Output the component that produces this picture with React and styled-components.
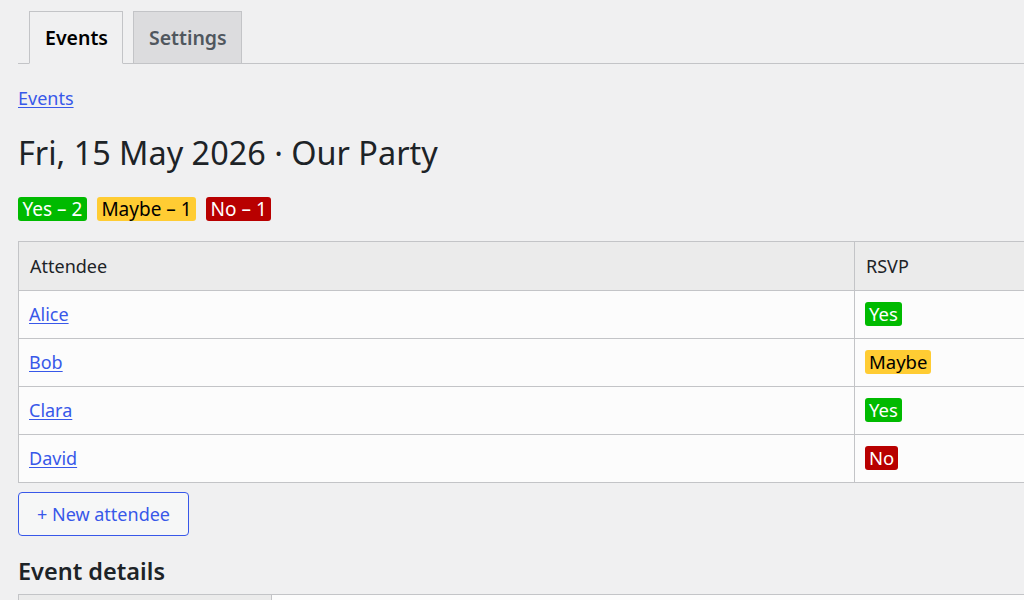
import React from "react";
import styled, { createGlobalStyle } from "styled-components";

const Global = createGlobalStyle`
  html, body { margin: 0; padding: 0; overflow: hidden; }
  body {
    background: #f0f0f1;
    font-family: "Noto Sans", "Open Sans", sans-serif;
    color: #1d2327;
    font-size: 18px;
  }
`;

const Page = styled.div`
  padding: 11px 0 0 18px;
  width: 1200px;
`;

const TabBar = styled.nav`
  display: flex;
  gap: 10px;
  padding-left: 11px;
  border-bottom: 1px solid #c3c4c7;
  width: 1006px;
`;

const Tab = styled.div`
  box-sizing: border-box;
  height: 53px;
  margin-bottom: -1px;
  padding: 0 14px 0 15px;
  display: flex;
  align-items: center;
  font-size: 19.5px;
  font-weight: 600;
  border: 1px solid #c3c4c7;
  background: ${(p) => (p.$active ? "#f0f0f1" : "#dcdcde")};
  color: ${(p) => (p.$active ? "#000" : "#50575e")};
  border-bottom: ${(p) => (p.$active ? "1px solid #f0f0f1" : "1px solid #c3c4c7")};
`;

const Link = styled.a`
  color: #3858e9;
  text-decoration: underline;
  text-underline-offset: 2px;
  cursor: pointer;
`;

const Crumb = styled.div`
  margin-top: 22px;
  line-height: 24px;
`;

const Title = styled.h1`
  font-size: 32.4px;
  font-weight: 400;
  margin: 20px 0 0;
  line-height: 44px;
`;

const Badges = styled.div`
  display: flex;
  gap: 10px;
  margin-top: 23px;
`;

const colors = {
  yes: ["#00ba00", "#fff"],
  maybe: ["#ffcc33", "#000"],
  no: ["#b80000", "#fff"],
};

const Badge = styled.span`
  display: inline-block;
  background: ${(p) => colors[p.$kind][0]};
  color: ${(p) => colors[p.$kind][1]};
  border-radius: 3px;
  padding: 0 ${(p) => (p.$big ? "4.5px" : "4px")};
  line-height: 24px;
  font-size: ${(p) => (p.$big ? "19px" : "18.5px")};
`;

const Table = styled.table`
  border-collapse: collapse;
  margin-top: 20px;
  width: 1100px;
  font-size: 18px;
`;

const Th = styled.th`
  text-align: left;
  font-weight: 400;
  background: #ebebeb;
  border: 1px solid #c3c4c7;
  padding: 10px 11px;
  line-height: 28px;
  width: ${(p) => p.$w || "auto"};
  color: #1d2327;
`;

const Td = styled.td`
  background: #fcfcfc;
  border: 1px solid #c3c4c7;
  padding: 10px;
  line-height: 27px;
`;

const Button = styled.button`
  margin-top: 9px;
  font-family: inherit;
  font-size: 18px;
  color: #3858e9;
  background: #f6f7f7;
  border: 1px solid #3858e9;
  border-radius: 4px;
  padding: 0 18px;
  height: 44px;
  cursor: pointer;
`;

const H2 = styled.h2`
  font-size: 23.5px;
  font-weight: 600;
  margin: 18px 0 0;
  line-height: 34px;
`;

const DetailTable = styled(Table)`
  margin-top: 6px;
`;

const rows = [
  ["Alice", "yes", "Yes"],
  ["Bob", "maybe", "Maybe"],
  ["Clara", "yes", "Yes"],
  ["David", "no", "No"],
];

export default function App() {
  return (
    <>
      <Global />
      <Page>
        <TabBar>
          <Tab $active>Events</Tab>
          <Tab>Settings</Tab>
        </TabBar>
        <Crumb>
          <Link>Events</Link>
        </Crumb>
        <Title>Fri, 15 May 2026 · Our Party</Title>
        <Badges>
          <Badge $big $kind="yes">Yes – 2</Badge>
          <Badge $big $kind="maybe">Maybe – 1</Badge>
          <Badge $big $kind="no">No – 1</Badge>
        </Badges>
        <Table>
          <thead>
            <tr>
              <Th $w="813px">Attendee</Th>
              <Th>RSVP</Th>
            </tr>
          </thead>
          <tbody>
            {rows.map(([n, k, l]) => (
              <tr key={n}>
                <Td>
                  <Link>{n}</Link>
                </Td>
                <Td>
                  <Badge $kind={k}>{l}</Badge>
                </Td>
              </tr>
            ))}
          </tbody>
        </Table>
        <Button>+ New attendee</Button>
        <H2>Event details</H2>
        <DetailTable>
          <tbody>
            <tr>
              <Th $w="230px">Date</Th>
              <Td>Fri, 15 May 2026</Td>
            </tr>
          </tbody>
        </DetailTable>
      </Page>
    </>
  );
}
